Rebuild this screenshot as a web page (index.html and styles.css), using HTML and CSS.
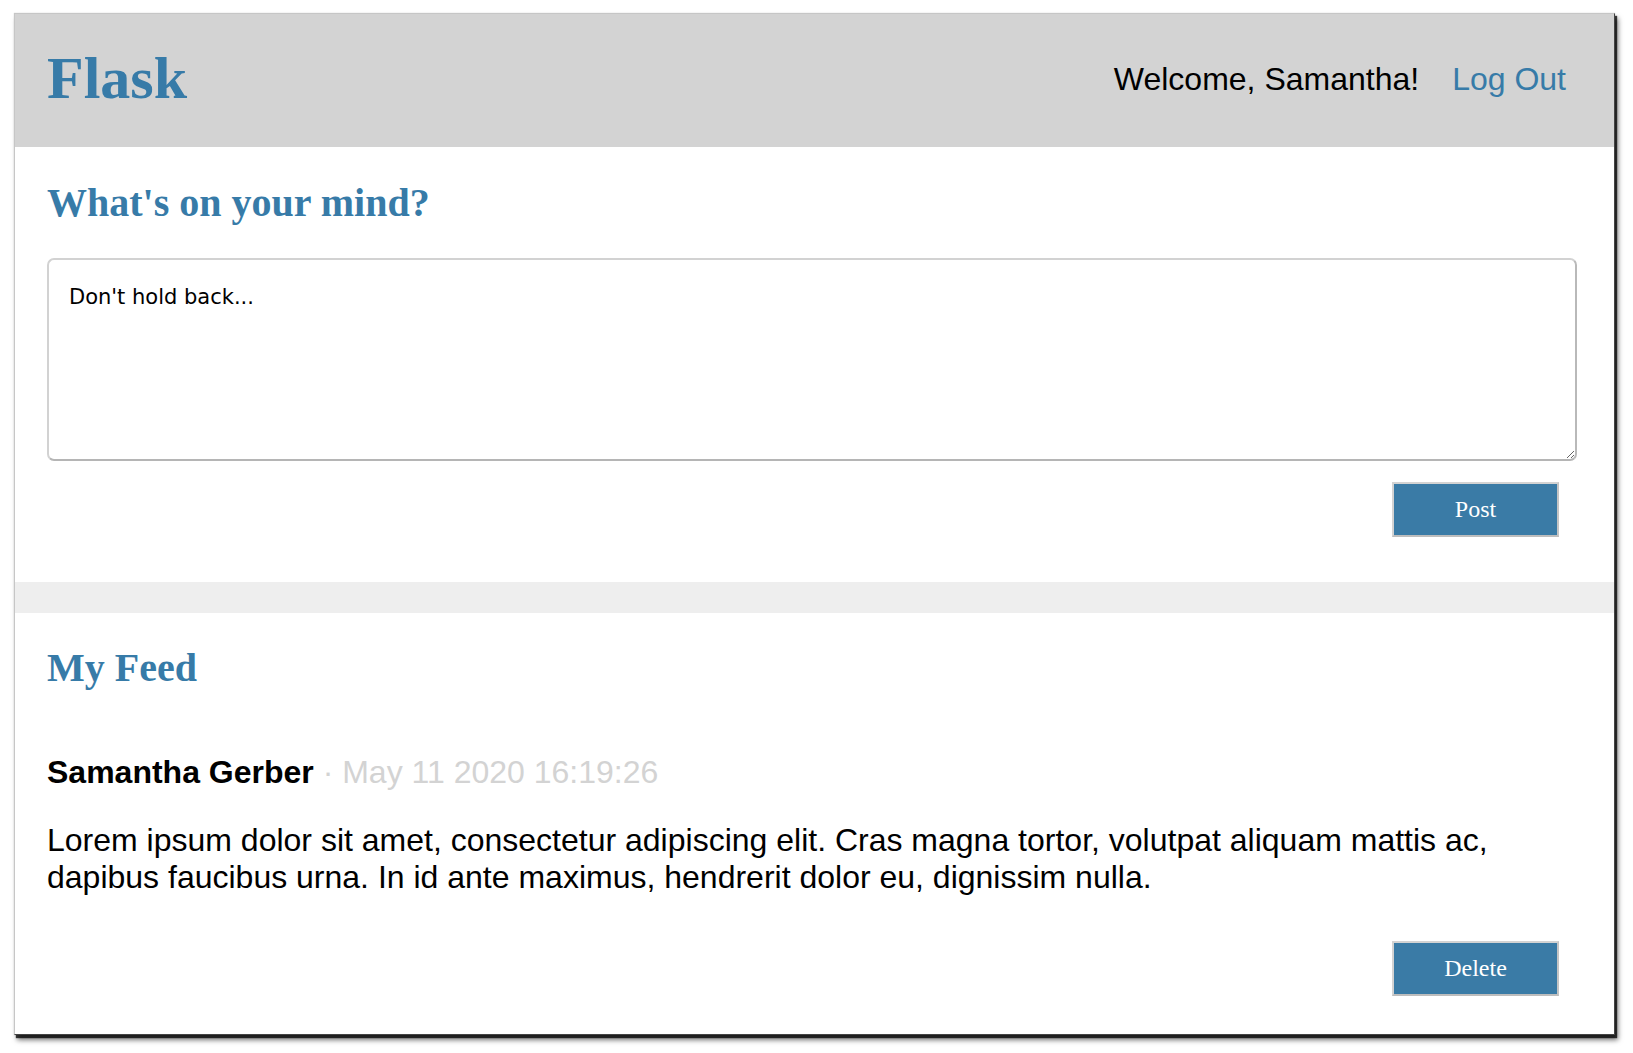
FILE: index.html
```html
<!DOCTYPE html>
<html lang="en">
<head>
<meta charset="utf-8">
<title>Flask</title>
<link rel="stylesheet" href="styles.css">
</head>
<body>
<div class="window">
  <header class="topbar">
    <h1 class="brand">Flask</h1>
    <nav class="nav">
      <span class="welcome">Welcome, Samantha!</span>
      <a class="logout" href="#">Log Out</a>
    </nav>
  </header>
  <section class="panel compose">
    <h2 class="heading">What's on your mind?</h2>
    <textarea class="composer" placeholder="Don't hold back..."></textarea>
    <div class="actions"><button class="btn" type="button">Post</button></div>
  </section>
  <section class="panel feed">
    <h2 class="heading">My Feed</h2>
    <article class="post">
      <div class="post-meta"><span class="author">Samantha Gerber</span> <span class="date">· May 11 2020 16:19:26</span></div>
      <p class="post-body">Lorem ipsum dolor sit amet, consectetur adipiscing elit. Cras magna tortor, volutpat aliquam mattis ac, dapibus faucibus urna. In id ante maximus, hendrerit dolor eu, dignissim nulla.</p>
      <div class="actions"><button class="btn" type="button">Delete</button></div>
    </article>
  </section>
</div>
</body>
</html>
```

FILE: styles.css
```css
html, body {
  margin: 0;
  padding: 0;
  background: #ffffff;
  min-height: 1053px;
}

body {
  font-family: "Liberation Sans", Arial, sans-serif;
  color: #000;
}

.window {
  box-sizing: border-box;
  width: 1601px;
  height: 1022px;
  margin: 13px 0 0 14px;
  border: 1px solid #c6c6c6;
  border-right-color: #444;
  border-bottom-color: #444;
  background: #eeeeee;
  box-shadow: 2px 3px 1px rgba(0, 0, 0, 0.75), 3px 5px 5px rgba(0, 0, 0, 0.55), 0 0 1px rgba(0, 0, 0, 0.2);
  display: flex;
  flex-direction: column;
  overflow: hidden;
}

.topbar {
  height: 133px;
  flex: none;
  box-sizing: border-box;
  background: #d3d3d3;
  display: flex;
  align-items: flex-start;
  justify-content: space-between;
  padding: 34px 48px 0 32px;
}

.brand {
  margin: 0;
  font-family: "Liberation Serif", "Times New Roman", serif;
  font-weight: bold;
  font-size: 60px;
  line-height: 60px;
  color: #377ba8;
}

.nav {
  display: flex;
  align-items: baseline;
  margin-top: 15px;
  font-size: 32px;
  line-height: 32px;
}

.welcome {
  margin-right: 33px;
}

.logout {
  color: #377ba8;
  text-decoration: none;
}

.panel {
  background: #ffffff;
  box-sizing: border-box;
  padding: 0 37px 0 32px;
}

.compose {
  flex: none;
  height: 435px;
  padding-top: 36px;
}

.feed {
  flex: 1;
  margin-top: 31px;
  padding-top: 35px;
}

.heading {
  margin: 0;
  font-family: "Liberation Serif", "Times New Roman", serif;
  font-weight: bold;
  font-size: 40px;
  line-height: 40px;
  color: #377ba8;
}

.composer {
  display: block;
  box-sizing: border-box;
  width: 100%;
  height: 203px;
  margin-top: 35px;
  padding: 25px 20px 20px 20px;
  border: 2px solid;
  border-color: #d2d2d2 #b9b9b9 #b5b5b5 #d2d2d2;
  border-radius: 7px;
  font-family: "DejaVu Sans", sans-serif;
  font-size: 21px;
  line-height: 24px;
  color: #000;
  resize: vertical;
  outline: none;
}

.composer::placeholder {
  color: #000;
  opacity: 1;
}

.actions {
  display: flex;
  justify-content: flex-end;
  margin-top: 21px;
  padding-right: 18px;
}

.btn {
  box-sizing: border-box;
  width: 167px;
  height: 55px;
  padding: 0;
  background: #3a7ba6;
  color: #ffffff;
  border: 2px solid;
  border-color: #d3d3d3 #c4c4c4 #bdbdbd #d3d3d3;
  font-family: "Liberation Serif", "Times New Roman", serif;
  font-size: 24px;
  cursor: pointer;
}

.post {
  margin-top: 66px;
}

.post-meta {
  font-size: 32px;
  line-height: 37px;
}

.author {
  font-weight: bold;
}

.date {
  color: #d3d3d3;
}

.post-body {
  margin: 31px 0 0 0;
  font-size: 32px;
  line-height: 36.5px;
  padding-right: 30px;
}

.post .actions {
  margin-top: 46px;
}
```
